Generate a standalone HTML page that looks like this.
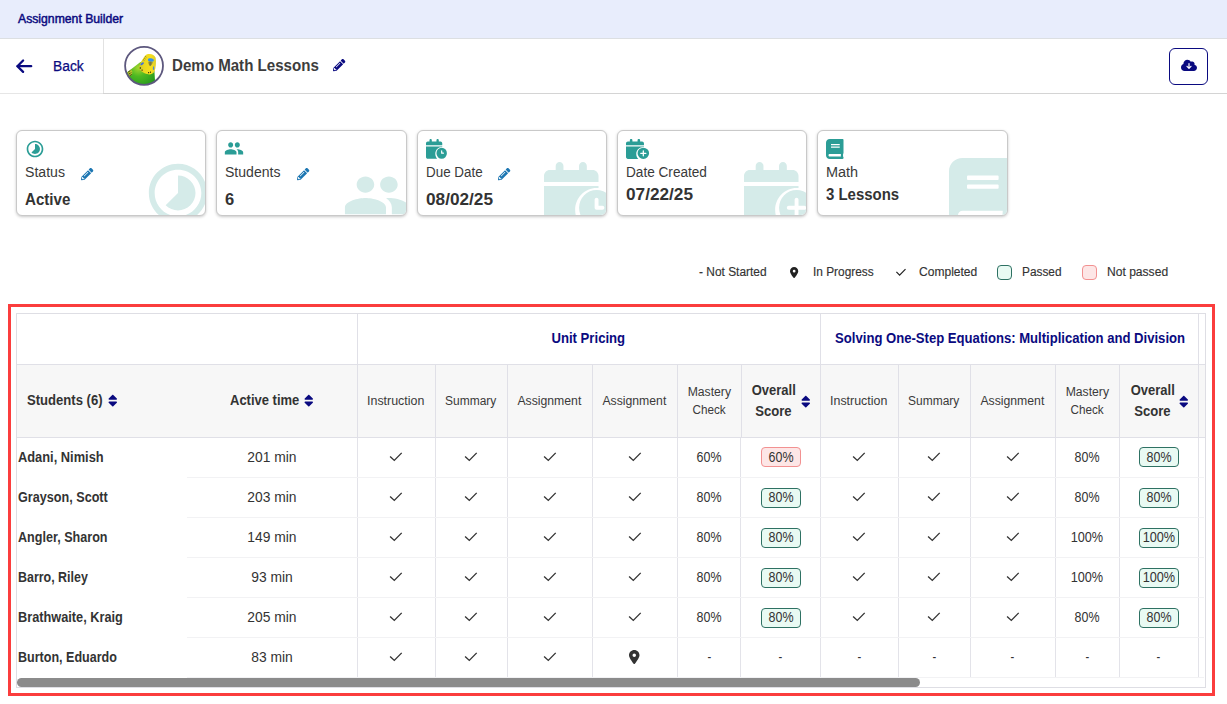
<!DOCTYPE html>
<html lang="en">
<head>
<meta charset="utf-8">
<title>Assignment Builder</title>
<style>
*{box-sizing:border-box;margin:0;padding:0}
html,body{width:1227px;height:704px;overflow:hidden;background:#fff}
body{font-family:"Liberation Sans",sans-serif;color:#333;position:relative}
.a{position:absolute}
.t{position:absolute;white-space:nowrap;line-height:1;display:block}
svg{position:absolute;overflow:visible}
#topbar{left:0;top:0;width:1227px;height:38px;background:#e8edfc}
#topline{left:0;top:38px;width:1227px;height:1px;background:#dcdfe2}
#hdrline{left:0;top:93px;width:1227px;height:1px;background:linear-gradient(90deg,#e6e6e6 103px,#d4d4d4 103px)}
#vdiv{left:103px;top:39px;width:1px;height:54px;background:#e2e2e2}
#avatar{left:124.6px;top:46.4px;width:38.8px;height:38.8px;border-radius:50%;background:#fff;overflow:hidden}
#ring{left:124px;top:46px}
#dl{left:1169px;top:48px;width:39px;height:37px;border:1px solid #0a0a80;border-radius:6px;background:#fff}
.card{position:absolute;top:130px;height:86px;background:#fff;border:1px solid #c9c9c9;border-radius:6px;box-shadow:0 1px 3px rgba(0,0,0,.22);overflow:hidden}
.lg{position:absolute;top:265px;width:15px;height:15px;border-radius:4px}
#redbox{left:8px;top:304px;width:1207px;height:392px;border:3px solid #fb3d3d}
#tbl{left:16px;top:313px;width:1190px;height:375px;border:1px solid #dedee4;background:#fff;overflow:hidden}
.h2bg{left:17px;top:365px;width:1188px;height:72px;background:#f7f7f7}
.vl{position:absolute;width:1px;background:#e0e0e7}
.vb{position:absolute;width:1px;background:#e3e3e9}
.hl{position:absolute;height:1px;background:#e0e0e7}
.rl{position:absolute;height:1px;left:187px;width:1017px;background:#f2f2f4}
.bd{position:absolute;width:40px;height:20px;border-radius:4px;border:1px solid}
.bp{border-color:#2e7163;background:#e9faf3}
.bf{border-color:#f29191;background:#fde6e6}
#thumb{left:17px;top:678px;width:903px;height:9px;border-radius:5px;background:#8b8b8b}
</style>
</head>
<body>
<div class="a" id="topbar"></div><div class="a" id="topline"></div>
<span class="t" style="left:18.30px;top:13px;font-size:12px;-webkit-text-stroke:0.45px #0a0a80;color:#0a0a80;transform:scaleX(1.0174);transform-origin:0 50%">Assignment Builder</span>
<div class="a" id="hdrline"></div><div class="a" id="vdiv"></div>
<svg style="left:14px;top:57px" width="20" height="18" viewBox="14 57 20 18"><g fill="none" stroke="#0a0a80" stroke-width="2.3" stroke-linecap="round" stroke-linejoin="round"><path d="M17.6 66.200H31.200"/><path d="M23.100 60.500L17.400 66.200L23.100 71.900"/></g></svg>
<span class="t" style="left:52.60px;top:59px;font-size:14px;-webkit-text-stroke:0.25px #0a0a80;color:#0a0a80;transform:scaleX(0.9885);transform-origin:0 50%">Back</span>
<div class="a" id="avatar"><svg style="left:-4.6px;top:-4.4px" width="48" height="48" viewBox="0 0 704 704"><defs><radialGradient id="gb" cx="270" cy="380" r="360" gradientUnits="userSpaceOnUse"><stop offset="0" stop-color="#a6d62e"/><stop offset=".35" stop-color="#4db822"/><stop offset=".75" stop-color="#2c9f1d"/><stop offset="1" stop-color="#1d8418"/></radialGradient><linearGradient id="gh" x1="280" y1="0" x2="530" y2="0" gradientUnits="userSpaceOnUse"><stop offset="0" stop-color="#c9c62c"/><stop offset=".3" stop-color="#ecd81f"/><stop offset=".7" stop-color="#f6de1c"/><stop offset="1" stop-color="#d9cc30"/></linearGradient></defs><path d="M95 452L200 372L300 292L505 425L513 560L498 670L170 670Z" fill="url(#gb)"/><path d="M108 442L160 404L182 432L176 480L138 506Z" fill="#b9c22a"/><path d="M120 440q22 -4 30 -22M128 468q24 -2 36 -22M140 494q22 -4 32 -22" fill="none" stroke="#2a2a10" stroke-width="11"/><path d="M281 378C280 346 300 300 330 255C352 222 372 192 398 181C442 164 506 180 523 232C535 300 523 380 509 425C493 470 440 483 398 471C350 457 288 428 281 378Z" fill="url(#gh)"/><path d="M352 232l22 18M338 256l20 16M366 208l20 16" stroke="#55551a" stroke-width="8" fill="none"/><ellipse cx="453" cy="264" rx="44" ry="25" fill="#3390ee" transform="rotate(12 453 264)"/><path d="M416 290C438 281 466 284 480 296C472 332 452 352 441 354C424 342 414 316 416 290Z" fill="#8e8a42"/><path d="M446 296L442 346" stroke="#5f5c2a" stroke-width="7"/><ellipse cx="325" cy="319" rx="30" ry="15" fill="#3d6fe0" transform="rotate(-40 325 319)"/><ellipse cx="492" cy="384" rx="9" ry="27" fill="#4a86dc"/><circle cx="298" cy="381" r="11" fill="#1e1e12"/><circle cx="324" cy="412" r="10" fill="#1e1e12"/><circle cx="419" cy="450" r="9" fill="#1e1e12"/><circle cx="447" cy="442" r="9" fill="#1e1e12"/></svg></div><svg id="ring" width="40" height="40" viewBox="0 0 40 40"><circle cx="20.050" cy="19.850" r="18.950" fill="none" stroke="#5d587e" stroke-width="1.8"/></svg>
<span class="t" style="left:172.20px;top:58px;font-size:16px;font-weight:700;color:#3d3d3d;transform:scaleX(0.9434);transform-origin:0 50%">Demo Math Lessons</span>
<svg style="left:333.00px;top:59.00px" width="12.30" height="12.30" viewBox="0 0 512 512"><path fill="#0a0a80" fill-rule="evenodd" d="M497.9 142.1l-46.1 46.1c-4.7 4.7-12.3 4.7-17 0l-111-111c-4.7-4.7-4.7-12.3 0-17l46.1-46.1c18.7-18.7 49.1-18.7 67.9 0l60.1 60.1c18.800 18.700 18.800 49.100 0 67.900zM284.200 99.800L21.600 362.400.400 483.900c-2.900 16.400 11.400 30.600 27.800 27.800l121.500-21.300 262.600-262.600c4.700-4.700 4.700-12.300 0-17l-111-111c-4.800-4.700-12.400-4.700-17.100 0zM124.100 339.900c-5.500-5.500-5.500-14.300 0-19.800l154-154c5.500-5.500 14.300-5.500 19.800 0s5.500 14.300 0 19.800l-154 154c-5.500 5.500-14.300 5.500-19.800 0zM88 424h48v36.300l-64.500 11.300-31.100-31.100L51.700 376H88v48z"/></svg>
<div class="a" id="dl"></div>
<svg style="left:1181.00px;top:58.80px" width="16.00" height="12.80" viewBox="0 0 640 512"><path fill="#0a0a80" fill-rule="evenodd" d="M144 480C64.500 480 0 415.500 0 336c0-62.800 40.200-116.200 96.200-135.900c-.1-2.700-.2-5.400-.2-8.100c0-88.400 71.600-160 160-160c59.300 0 111 32.200 138.700 80.200C409.900 102 428.300 96 448 96c53 0 96 43 96 96c0 12.200-2.300 23.800-6.400 34.600C596 238.400 640 290.100 640 352c0 70.700-57.300 128-128 128H144zm79-167l80 80c9.400 9.400 24.600 9.400 33.900 0l80-80c9.400-9.400 9.400-24.600 0-33.900s-24.600-9.400-33.900 0l-39 39V184c0-13.300-10.700-24-24-24s-24 10.700-24 24V318.100l-39-39c-9.400-9.400-24.600-9.400-33.900 0s-9.400 24.600 0 33.900z"/></svg>
<div class="card" style="left:16px;width:190px"><svg style="left:126.10px;top:27.10px" width="70.00" height="70.00" viewBox="0 0 24 24"><path fill="#d5ebe9" fill-rule="evenodd" d="M16.240 7.760C15.070 6.590 13.540 6 12 6v6l-4.240 4.240c2.340 2.340 6.140 2.340 8.490 0 2.340-2.340 2.340-6.140-.010-8.480zM12 2C6.480 2 2 6.480 2 12s4.480 10 10 10 10-4.480 10-10S17.520 2 12 2zm0 18c-4.420 0-8-3.580-8-8s3.580-8 8-8 8 3.580 8 8-3.580 8-8 8z"/></svg></div>
<svg style="left:24.90px;top:139.00px" width="20.00" height="20.00" viewBox="0 0 24 24"><path fill="#2b9d96" fill-rule="evenodd" d="M16.240 7.760C15.070 6.590 13.540 6 12 6v6l-4.240 4.240c2.340 2.340 6.140 2.340 8.490 0 2.340-2.340 2.340-6.140-.010-8.480zM12 2C6.480 2 2 6.480 2 12s4.480 10 10 10 10-4.480 10-10S17.520 2 12 2zm0 18c-4.420 0-8-3.580-8-8s3.580-8 8-8 8 3.580 8 8-3.580 8-8 8z"/></svg>
<span class="t" style="left:25.30px;top:165px;font-size:14px;color:#3a3a3a;transform:scaleX(1.0083);transform-origin:0 50%">Status</span>
<span class="t" style="left:25.30px;top:192px;font-size:16px;font-weight:700;transform:scaleX(0.9447);transform-origin:0 50%">Active</span>
<svg style="left:80.90px;top:167.80px" width="12.30" height="12.30" viewBox="0 0 512 512"><path fill="#1c76b2" fill-rule="evenodd" d="M497.9 142.1l-46.1 46.1c-4.7 4.7-12.3 4.7-17 0l-111-111c-4.7-4.7-4.7-12.3 0-17l46.1-46.1c18.7-18.7 49.1-18.7 67.9 0l60.1 60.1c18.800 18.700 18.800 49.100 0 67.900zM284.200 99.800L21.600 362.400.400 483.900c-2.900 16.400 11.400 30.600 27.800 27.800l121.500-21.300 262.600-262.600c4.700-4.700 4.700-12.300 0-17l-111-111c-4.800-4.700-12.400-4.700-17.100 0zM124.100 339.900c-5.500-5.500-5.500-14.300 0-19.800l154-154c5.500-5.500 14.300-5.500 19.800 0s5.500 14.300 0 19.800l-154 154c-5.500 5.500-14.300 5.500-19.800 0zM88 424h48v36.300l-64.500 11.300-31.100-31.100L51.700 376H88v48z"/></svg>
<div class="card" style="left:216px;width:191px"><svg style="left:125.00px;top:32.00px" width="70.39" height="64.80" viewBox="0 0 24 24" preserveAspectRatio="none"><path fill="#d5ebe9" fill-rule="evenodd" d="M16 11c1.660 0 2.990-1.340 2.990-3S17.660 5 16 5c-1.660 0-3 1.340-3 3s1.340 3 3 3zm-8 0c1.660 0 2.990-1.340 2.990-3S9.660 5 8 5C6.340 5 5 6.340 5 8s1.340 3 3 3zm0 2c-2.330 0-7 1.170-7 3.500V19h14v-2.500c0-2.330-4.670-3.500-7-3.500zm8 0c-.290 0-.620.020-.970.050 1.160.840 1.970 1.970 1.970 3.450V19h6v-2.500c0-2.330-4.670-3.500-7-3.500z"/></svg></div>
<svg style="left:224.10px;top:138.40px" width="20.00" height="20.88" viewBox="0 0 24 24" preserveAspectRatio="none"><path fill="#2b9d96" fill-rule="evenodd" d="M16 11c1.660 0 2.990-1.340 2.990-3S17.660 5 16 5c-1.660 0-3 1.340-3 3s1.340 3 3 3zm-8 0c1.660 0 2.990-1.340 2.990-3S9.660 5 8 5C6.340 5 5 6.340 5 8s1.340 3 3 3zm0 2c-2.330 0-7 1.170-7 3.500V19h14v-2.500c0-2.330-4.670-3.500-7-3.500zm8 0c-.290 0-.620.020-.970.050 1.160.840 1.970 1.970 1.970 3.450V19h6v-2.500c0-2.330-4.670-3.500-7-3.500z"/></svg>
<span class="t" style="left:225.30px;top:165px;font-size:14px;color:#3a3a3a;transform:scaleX(1.0037);transform-origin:0 50%">Students</span>
<span class="t" style="left:225.30px;top:192px;font-size:16px;font-weight:700;transform:scaleX(1.0316);transform-origin:0 50%">6</span>
<svg style="left:296.90px;top:167.80px" width="12.30" height="12.30" viewBox="0 0 512 512"><path fill="#1c76b2" fill-rule="evenodd" d="M497.9 142.1l-46.1 46.1c-4.7 4.7-12.3 4.7-17 0l-111-111c-4.7-4.7-4.7-12.3 0-17l46.1-46.1c18.7-18.7 49.1-18.7 67.9 0l60.1 60.1c18.800 18.700 18.800 49.100 0 67.900zM284.200 99.800L21.600 362.400.400 483.900c-2.900 16.400 11.400 30.600 27.800 27.800l121.500-21.300 262.600-262.600c4.700-4.700 4.700-12.300 0-17l-111-111c-4.800-4.700-12.400-4.700-17.100 0zM124.100 339.900c-5.500-5.500-5.500-14.300 0-19.800l154-154c5.500-5.500 14.300-5.500 19.800 0s5.500 14.300 0 19.800l-154 154c-5.500 5.500-14.300 5.500-19.800 0zM88 424h48v36.300l-64.500 11.300-31.100-31.100L51.700 376H88v48z"/></svg>
<div class="card" style="left:417px;width:190px"><svg style="left:126.00px;top:31.00px" width="70.10" height="63.74" viewBox="0 0 576 512" preserveAspectRatio="none"><path fill="#d5ebe9" fill-rule="evenodd" d="M96 32V64H48C21.500 64 0 85.500 0 112v48H448V112c0-26.500-21.500-48-48-48H352V32c0-17.700-14.300-32-32-32s-32 14.300-32 32V64H160V32c0-17.700-14.300-32-32-32S96 14.300 96 32zM448 192H0V464c0 26.500 21.500 48 48 48H308.200C276.100 479.800 256 434.300 256 384c0-97.200 78.800-176 176-176c5.400 0 10.700 .2 16 .7V192zM576 368a144 144 0 1 0 -288 0 144 144 0 1 0 288 0zM432 288c8.800 0 16 7.200 16 16v48h32c8.800 0 16 7.200 16 16s-7.200 16-16 16H432c-8.800 0-16-7.200-16-16V304c0-8.800 7.200-16 16-16z"/></svg></div>
<svg style="left:426.00px;top:139.10px" width="20.91" height="19.81" viewBox="0 0 576 512" preserveAspectRatio="none"><path fill="#2b9d96" fill-rule="evenodd" d="M96 32V64H48C21.500 64 0 85.500 0 112v48H448V112c0-26.500-21.500-48-48-48H352V32c0-17.700-14.300-32-32-32s-32 14.300-32 32V64H160V32c0-17.700-14.300-32-32-32S96 14.300 96 32zM448 192H0V464c0 26.500 21.500 48 48 48H308.200C276.100 479.800 256 434.300 256 384c0-97.200 78.800-176 176-176c5.400 0 10.700 .2 16 .7V192zM576 368a144 144 0 1 0 -288 0 144 144 0 1 0 288 0zM432 288c8.800 0 16 7.200 16 16v48h32c8.800 0 16 7.200 16 16s-7.200 16-16 16H432c-8.800 0-16-7.200-16-16V304c0-8.800 7.200-16 16-16z"/></svg>
<span class="t" style="left:426.30px;top:165px;font-size:14px;color:#3a3a3a;transform:scaleX(0.9569);transform-origin:0 50%">Due Date</span>
<span class="t" style="left:426.30px;top:192px;font-size:16px;font-weight:700;transform:scaleX(1.0750);transform-origin:0 50%">08/02/25</span>
<svg style="left:497.70px;top:167.80px" width="12.30" height="12.30" viewBox="0 0 512 512"><path fill="#1c76b2" fill-rule="evenodd" d="M497.9 142.1l-46.1 46.1c-4.7 4.7-12.3 4.7-17 0l-111-111c-4.7-4.7-4.7-12.3 0-17l46.1-46.1c18.7-18.7 49.1-18.7 67.9 0l60.1 60.1c18.800 18.700 18.800 49.100 0 67.900zM284.200 99.800L21.600 362.400.400 483.900c-2.900 16.400 11.400 30.600 27.800 27.800l121.500-21.300 262.600-262.600c4.700-4.700 4.700-12.300 0-17l-111-111c-4.800-4.700-12.400-4.700-17.100 0zM124.100 339.900c-5.500-5.500-5.500-14.300 0-19.800l154-154c5.500-5.500 14.300-5.500 19.800 0s5.500 14.300 0 19.800l-154 154c-5.500 5.500-14.300 5.500-19.800 0zM88 424h48v36.300l-64.500 11.300-31.100-31.100L51.700 376H88v48z"/></svg>
<div class="card" style="left:617px;width:190px"><svg style="left:126.20px;top:31.00px" width="70.10" height="63.74" viewBox="0 0 576 512" preserveAspectRatio="none"><path fill="#d5ebe9" fill-rule="evenodd" d="M96 32V64H48C21.500 64 0 85.500 0 112v48H448V112c0-26.500-21.500-48-48-48H352V32c0-17.700-14.300-32-32-32s-32 14.300-32 32V64H160V32c0-17.700-14.300-32-32-32S96 14.300 96 32zM448 192H0V464c0 26.500 21.500 48 48 48H308.200C276.100 479.800 256 434.300 256 384c0-97.200 78.800-176 176-176c5.400 0 10.700 .2 16 .7V192zM576 368a144 144 0 1 0 -288 0 144 144 0 1 0 288 0zM432 288c8.800 0 16 7.200 16 16v48h48c8.800 0 16 7.200 16 16s-7.200 16-16 16H448v48c0 8.800-7.200 16-16 16s-16-7.200-16-16V384H368c-8.800 0-16-7.200-16-16s7.200-16 16-16h48V304c0-8.800 7.200-16 16-16z"/></svg></div>
<svg style="left:626.00px;top:139.10px" width="23.10" height="19.92" viewBox="0 0 576 512" preserveAspectRatio="none"><path fill="#2b9d96" fill-rule="evenodd" d="M96 32V64H48C21.500 64 0 85.500 0 112v48H448V112c0-26.500-21.500-48-48-48H352V32c0-17.700-14.300-32-32-32s-32 14.300-32 32V64H160V32c0-17.700-14.300-32-32-32S96 14.300 96 32zM448 192H0V464c0 26.500 21.500 48 48 48H308.200C276.100 479.800 256 434.300 256 384c0-97.200 78.800-176 176-176c5.400 0 10.700 .2 16 .7V192zM576 368a144 144 0 1 0 -288 0 144 144 0 1 0 288 0zM432 288c8.800 0 16 7.200 16 16v48h48c8.800 0 16 7.200 16 16s-7.200 16-16 16H448v48c0 8.800-7.200 16-16 16s-16-7.200-16-16V384H368c-8.800 0-16-7.200-16-16s7.200-16 16-16h48V304c0-8.800 7.200-16 16-16z"/></svg>
<span class="t" style="left:625.60px;top:165px;font-size:14px;color:#3a3a3a;transform:scaleX(0.9720);transform-origin:0 50%">Date Created</span>
<span class="t" style="left:625.60px;top:187px;font-size:16px;font-weight:700;transform:scaleX(1.0750);transform-origin:0 50%">07/22/25</span>
<div class="card" style="left:817px;width:191px"><svg style="left:130.90px;top:26.75px" width="63.17" height="70.40" viewBox="0 0 448 512" preserveAspectRatio="none"><path fill="#d5ebe9" fill-rule="evenodd" d="M448 360V24c0-13.300-10.700-24-24-24H96C43 0 0 43 0 96v320c0 53 43 96 96 96h328c13.300 0 24-10.700 24-24v-16c0-7.500-3.500-14.300-8.900-18.700-4.200-15.400-4.200-59.300 0-74.700 5.400-4.300 8.900-11.100 8.900-18.600zM128 134c0-3.300 2.700-6 6-6h212c3.300 0 6 2.700 6 6v20c0 3.300-2.700 6-6 6H134c-3.300 0-6-2.700-6-6v-20zm0 64c0-3.300 2.700-6 6-6h212c3.300 0 6 2.700 6 6v20c0 3.300-2.700 6-6 6H134c-3.300 0-6-2.700-6-6v-20zm253.400 250H96c-17.700 0-32-14.300-32-32 0-17.600 14.400-32 32-32h285.400c-1.900 17.100-1.900 46.900 0 64z"/></svg></div>
<svg style="left:825.90px;top:139.00px" width="17.50" height="20.00" viewBox="0 0 448 512"><path fill="#2b9d96" fill-rule="evenodd" d="M448 360V24c0-13.300-10.700-24-24-24H96C43 0 0 43 0 96v320c0 53 43 96 96 96h328c13.300 0 24-10.700 24-24v-16c0-7.500-3.500-14.300-8.900-18.700-4.200-15.400-4.200-59.300 0-74.700 5.400-4.300 8.900-11.100 8.900-18.600zM128 134c0-3.300 2.700-6 6-6h212c3.300 0 6 2.700 6 6v20c0 3.300-2.700 6-6 6H134c-3.300 0-6-2.700-6-6v-20zm0 64c0-3.300 2.700-6 6-6h212c3.300 0 6 2.700 6 6v20c0 3.300-2.700 6-6 6H134c-3.300 0-6-2.700-6-6v-20zm253.400 250H96c-17.700 0-32-14.300-32-32 0-17.600 14.400-32 32-32h285.400c-1.900 17.100-1.900 46.900 0 64z"/></svg>
<span class="t" style="left:826.30px;top:165px;font-size:14px;color:#3a3a3a;transform:scaleX(1.0326);transform-origin:0 50%">Math</span>
<span class="t" style="left:826.30px;top:187px;font-size:16px;font-weight:700;transform:scaleX(0.9341);transform-origin:0 50%">3 Lessons</span>
<span class="t" style="left:698.60px;top:266px;font-size:12px;-webkit-text-stroke:0.15px #333;transform:scaleX(0.9936);transform-origin:0 50%">- Not Started</span>
<svg style="left:790.20px;top:266.80px" width="8.25" height="11.00" viewBox="0 0 384 512"><path fill="#222" fill-rule="evenodd" d="M215.700 499.200C267 435 384 279.400 384 192C384 86 298 0 192 0S0 86 0 192c0 87.400 117 243 168.300 307.200c12.300 15.300 35.100 15.300 47.400 0zM192 128a64 64 0 1 1 0 128 64 64 0 1 1 0-128z"/></svg>
<span class="t" style="left:812.60px;top:266px;font-size:12px;-webkit-text-stroke:0.15px #333;transform:scaleX(0.9891);transform-origin:0 50%">In Progress</span>
<svg style="left:894px;top:266px" width="14" height="12" viewBox="-7 -6 14 12"><path d="M-4.6 -0.100L-1.400 3.100L4.500 -2.900" fill="none" stroke="#222" stroke-width="1.2"/></svg>
<span class="t" style="left:918.80px;top:266px;font-size:12px;-webkit-text-stroke:0.15px #333;transform:scaleX(1.0040);transform-origin:0 50%">Completed</span>
<div class="lg" style="left:997px;border:1px solid #2e7163;background:#e9faf3"></div>
<span class="t" style="left:1022.20px;top:266px;font-size:12px;-webkit-text-stroke:0.15px #333;transform:scaleX(0.9883);transform-origin:0 50%">Passed</span>
<div class="lg" style="left:1082px;border:1px solid #f29191;background:#fde6e6"></div>
<span class="t" style="left:1107.00px;top:266px;font-size:12px;-webkit-text-stroke:0.15px #333;transform:scaleX(1.0064);transform-origin:0 50%">Not passed</span>
<div class="a" id="redbox"></div>
<div class="a" id="tbl"></div>
<div class="a h2bg"></div>
<div class="hl" style="left:17px;top:364px;width:1188px"></div>
<div class="hl" style="left:17px;top:437px;width:1188px"></div>
<div class="vl" style="left:357px;top:314px;height:50px"></div>
<div class="vl" style="left:820px;top:314px;height:50px"></div>
<div class="vl" style="left:1198px;top:314px;height:50px"></div>
<div class="vl" style="left:357px;top:365px;height:72px"></div>
<div class="vb" style="left:357px;top:438px;height:239px"></div>
<div class="vl" style="left:435px;top:365px;height:72px"></div>
<div class="vb" style="left:435px;top:438px;height:239px"></div>
<div class="vl" style="left:507px;top:365px;height:72px"></div>
<div class="vb" style="left:507px;top:438px;height:239px"></div>
<div class="vl" style="left:592px;top:365px;height:72px"></div>
<div class="vb" style="left:592px;top:438px;height:239px"></div>
<div class="vl" style="left:677px;top:365px;height:72px"></div>
<div class="vb" style="left:677px;top:438px;height:239px"></div>
<div class="vl" style="left:741px;top:365px;height:72px"></div>
<div class="vb" style="left:740px;top:438px;height:239px"></div>
<div class="vl" style="left:820px;top:365px;height:72px"></div>
<div class="vb" style="left:820px;top:438px;height:239px"></div>
<div class="vl" style="left:898px;top:365px;height:72px"></div>
<div class="vb" style="left:898px;top:438px;height:239px"></div>
<div class="vl" style="left:970px;top:365px;height:72px"></div>
<div class="vb" style="left:970px;top:438px;height:239px"></div>
<div class="vl" style="left:1055px;top:365px;height:72px"></div>
<div class="vb" style="left:1055px;top:438px;height:239px"></div>
<div class="vl" style="left:1119px;top:365px;height:72px"></div>
<div class="vb" style="left:1119px;top:438px;height:239px"></div>
<div class="vl" style="left:1198px;top:365px;height:72px"></div>
<div class="vb" style="left:1198px;top:438px;height:239px"></div>
<div class="rl" style="top:477px"></div>
<div class="rl" style="top:517px"></div>
<div class="rl" style="top:557px"></div>
<div class="rl" style="top:597px"></div>
<div class="rl" style="top:637px"></div>
<div class="rl" style="top:677px"></div>
<span class="t" style="left:549.32px;top:331px;font-size:14px;font-weight:700;color:#0a0a80;transform:scaleX(0.9381);transform-origin:50% 50%">Unit Pricing</span>
<span class="t" style="left:822.64px;top:331px;font-size:14px;font-weight:700;color:#0a0a80;transform:scaleX(0.9353);transform-origin:50% 50%">Solving One-Step Equations: Multiplication and Division</span>
<span class="t" style="left:27.00px;top:393px;font-size:14px;font-weight:700;transform:scaleX(0.9343);transform-origin:0 50%">Students (6)</span>
<svg style="left:107.70px;top:392.50px" width="9.54" height="15.26" viewBox="0 0 320 512"><path fill="#0a0a80" fill-rule="evenodd" d="M41 288h238c21.400 0 32.100 25.900 17 41L177 448c-9.400 9.400-24.600 9.400-33.900 0L24 329c-15.100-15.100-4.400-41 17-41zm255-105L177 64c-9.400-9.400-24.600-9.400-33.900 0L24 183c-15.100 15.100-4.400 41 17 41h238c21.400 0 32.100-25.900 17-41z"/></svg>
<span class="t" style="left:230.20px;top:393px;font-size:14px;font-weight:700;transform:scaleX(0.9279);transform-origin:0 50%">Active time</span>
<svg style="left:304.30px;top:392.50px" width="9.54" height="15.26" viewBox="0 0 320 512"><path fill="#0a0a80" fill-rule="evenodd" d="M41 288h238c21.400 0 32.100 25.900 17 41L177 448c-9.400 9.400-24.600 9.400-33.900 0L24 329c-15.100-15.100-4.400-41 17-41zm255-105L177 64c-9.400-9.400-24.600-9.400-33.900 0L24 183c-15.100 15.100-4.400 41 17 41h238c21.400 0 32.100-25.900 17-41z"/></svg>
<span class="t" style="left:368.47px;top:395px;font-size:12px;color:#3a3a3a;transform:scaleX(1.0350);transform-origin:50% 50%">Instruction</span>
<span class="t" style="left:445.48px;top:395px;font-size:12px;color:#3a3a3a;transform:scaleX(0.9967);transform-origin:50% 50%">Summary</span>
<span class="t" style="left:518.30px;top:395px;font-size:12px;color:#3a3a3a;transform:scaleX(1.0197);transform-origin:50% 50%">Assignment</span>
<span class="t" style="left:603.30px;top:395px;font-size:12px;color:#3a3a3a;transform:scaleX(1.0197);transform-origin:50% 50%">Assignment</span>
<span class="t" style="left:831.47px;top:395px;font-size:12px;color:#3a3a3a;transform:scaleX(1.0350);transform-origin:50% 50%">Instruction</span>
<span class="t" style="left:908.48px;top:395px;font-size:12px;color:#3a3a3a;transform:scaleX(0.9967);transform-origin:50% 50%">Summary</span>
<span class="t" style="left:981.30px;top:395px;font-size:12px;color:#3a3a3a;transform:scaleX(1.0197);transform-origin:50% 50%">Assignment</span>
<span class="t" style="left:687.81px;top:386px;font-size:12px;color:#3a3a3a;transform:scaleX(1.0154);transform-origin:50% 50%">Mastery</span>
<span class="t" style="left:692.14px;top:404px;font-size:12px;color:#3a3a3a;transform:scaleX(0.9747);transform-origin:50% 50%">Check</span>
<span class="t" style="left:1065.81px;top:386px;font-size:12px;color:#3a3a3a;transform:scaleX(1.0154);transform-origin:50% 50%">Mastery</span>
<span class="t" style="left:1070.14px;top:404px;font-size:12px;color:#3a3a3a;transform:scaleX(0.9747);transform-origin:50% 50%">Check</span>
<span class="t" style="left:750.16px;top:383px;font-size:14px;font-weight:700;transform:scaleX(0.9269);transform-origin:50% 50%">Overall</span>
<span class="t" style="left:754.44px;top:404px;font-size:14px;font-weight:700;transform:scaleX(0.9346);transform-origin:50% 50%">Score</span>
<svg style="left:800.50px;top:393.70px" width="9.54" height="15.26" viewBox="0 0 320 512"><path fill="#0a0a80" fill-rule="evenodd" d="M41 288h238c21.400 0 32.100 25.900 17 41L177 448c-9.400 9.400-24.600 9.400-33.900 0L24 329c-15.100-15.100-4.400-41 17-41zm255-105L177 64c-9.400-9.400-24.600-9.400-33.900 0L24 183c-15.100 15.100-4.400 41 17 41h238c21.400 0 32.100-25.900 17-41z"/></svg>
<span class="t" style="left:1128.76px;top:383px;font-size:14px;font-weight:700;transform:scaleX(0.9269);transform-origin:50% 50%">Overall</span>
<span class="t" style="left:1133.04px;top:404px;font-size:14px;font-weight:700;transform:scaleX(0.9346);transform-origin:50% 50%">Score</span>
<svg style="left:1178.50px;top:393.70px" width="9.54" height="15.26" viewBox="0 0 320 512"><path fill="#0a0a80" fill-rule="evenodd" d="M41 288h238c21.400 0 32.100 25.900 17 41L177 448c-9.400 9.400-24.600 9.400-33.900 0L24 329c-15.100-15.100-4.400-41 17-41zm255-105L177 64c-9.400-9.400-24.600-9.400-33.900 0L24 183c-15.100 15.100-4.400 41 17 41h238c21.400 0 32.100-25.900 17-41z"/></svg>
<span class="t" style="left:18.30px;top:450px;font-size:14px;font-weight:700;transform:scaleX(0.9174);transform-origin:0 50%">Adani, Nimish</span>
<span class="t" style="left:246.89px;top:450px;font-size:14px;transform:scaleX(0.9885);transform-origin:50% 50%">201 min</span>
<svg style="left:388.1px;top:450.0px" width="16" height="14" viewBox="-8 -7 16 14"><path d="M-5.900 -0.600L-1.700 3.400L5.700 -4.100" fill="none" stroke="#333" stroke-width="1.35"/></svg>
<svg style="left:463.1px;top:450.0px" width="16" height="14" viewBox="-8 -7 16 14"><path d="M-5.900 -0.600L-1.700 3.400L5.700 -4.100" fill="none" stroke="#333" stroke-width="1.35"/></svg>
<svg style="left:541.6px;top:450.0px" width="16" height="14" viewBox="-8 -7 16 14"><path d="M-5.900 -0.600L-1.700 3.400L5.700 -4.100" fill="none" stroke="#333" stroke-width="1.35"/></svg>
<svg style="left:626.6px;top:450.0px" width="16" height="14" viewBox="-8 -7 16 14"><path d="M-5.900 -0.600L-1.700 3.400L5.700 -4.100" fill="none" stroke="#333" stroke-width="1.35"/></svg>
<span class="t" style="left:695.13px;top:450px;font-size:14px;transform:scaleX(0.8904);transform-origin:50% 50%">60%</span>
<div class="bd bf" style="left:760.6px;top:447px"></div>
<span class="t" style="left:766.63px;top:450px;font-size:14px;transform:scaleX(0.8904);transform-origin:50% 50%">60%</span>
<svg style="left:851.1px;top:450.0px" width="16" height="14" viewBox="-8 -7 16 14"><path d="M-5.900 -0.600L-1.700 3.400L5.700 -4.100" fill="none" stroke="#333" stroke-width="1.35"/></svg>
<svg style="left:926.1px;top:450.0px" width="16" height="14" viewBox="-8 -7 16 14"><path d="M-5.900 -0.600L-1.700 3.400L5.700 -4.100" fill="none" stroke="#333" stroke-width="1.35"/></svg>
<svg style="left:1004.6px;top:450.0px" width="16" height="14" viewBox="-8 -7 16 14"><path d="M-5.900 -0.600L-1.700 3.400L5.700 -4.100" fill="none" stroke="#333" stroke-width="1.35"/></svg>
<span class="t" style="left:1073.13px;top:450px;font-size:14px;transform:scaleX(0.8904);transform-origin:50% 50%">80%</span>
<div class="bd bp" style="left:1138.7px;top:447px"></div>
<span class="t" style="left:1144.63px;top:450px;font-size:14px;transform:scaleX(0.8904);transform-origin:50% 50%">80%</span>
<span class="t" style="left:18.30px;top:490px;font-size:14px;font-weight:700;transform:scaleX(0.9016);transform-origin:0 50%">Grayson, Scott</span>
<span class="t" style="left:246.89px;top:490px;font-size:14px;transform:scaleX(0.9885);transform-origin:50% 50%">203 min</span>
<svg style="left:388.1px;top:490.0px" width="16" height="14" viewBox="-8 -7 16 14"><path d="M-5.900 -0.600L-1.700 3.400L5.700 -4.100" fill="none" stroke="#333" stroke-width="1.35"/></svg>
<svg style="left:463.1px;top:490.0px" width="16" height="14" viewBox="-8 -7 16 14"><path d="M-5.900 -0.600L-1.700 3.400L5.700 -4.100" fill="none" stroke="#333" stroke-width="1.35"/></svg>
<svg style="left:541.6px;top:490.0px" width="16" height="14" viewBox="-8 -7 16 14"><path d="M-5.900 -0.600L-1.700 3.400L5.700 -4.100" fill="none" stroke="#333" stroke-width="1.35"/></svg>
<svg style="left:626.6px;top:490.0px" width="16" height="14" viewBox="-8 -7 16 14"><path d="M-5.900 -0.600L-1.700 3.400L5.700 -4.100" fill="none" stroke="#333" stroke-width="1.35"/></svg>
<span class="t" style="left:695.13px;top:490px;font-size:14px;transform:scaleX(0.8904);transform-origin:50% 50%">80%</span>
<div class="bd bp" style="left:760.6px;top:488px"></div>
<span class="t" style="left:766.63px;top:490px;font-size:14px;transform:scaleX(0.8904);transform-origin:50% 50%">80%</span>
<svg style="left:851.1px;top:490.0px" width="16" height="14" viewBox="-8 -7 16 14"><path d="M-5.900 -0.600L-1.700 3.400L5.700 -4.100" fill="none" stroke="#333" stroke-width="1.35"/></svg>
<svg style="left:926.1px;top:490.0px" width="16" height="14" viewBox="-8 -7 16 14"><path d="M-5.900 -0.600L-1.700 3.400L5.700 -4.100" fill="none" stroke="#333" stroke-width="1.35"/></svg>
<svg style="left:1004.6px;top:490.0px" width="16" height="14" viewBox="-8 -7 16 14"><path d="M-5.900 -0.600L-1.700 3.400L5.700 -4.100" fill="none" stroke="#333" stroke-width="1.35"/></svg>
<span class="t" style="left:1073.13px;top:490px;font-size:14px;transform:scaleX(0.8904);transform-origin:50% 50%">80%</span>
<div class="bd bp" style="left:1138.7px;top:488px"></div>
<span class="t" style="left:1144.63px;top:490px;font-size:14px;transform:scaleX(0.8904);transform-origin:50% 50%">80%</span>
<span class="t" style="left:18.30px;top:530px;font-size:14px;font-weight:700;transform:scaleX(0.8989);transform-origin:0 50%">Angler, Sharon</span>
<span class="t" style="left:246.89px;top:530px;font-size:14px;transform:scaleX(0.9885);transform-origin:50% 50%">149 min</span>
<svg style="left:388.1px;top:530.0px" width="16" height="14" viewBox="-8 -7 16 14"><path d="M-5.900 -0.600L-1.700 3.400L5.700 -4.100" fill="none" stroke="#333" stroke-width="1.35"/></svg>
<svg style="left:463.1px;top:530.0px" width="16" height="14" viewBox="-8 -7 16 14"><path d="M-5.900 -0.600L-1.700 3.400L5.700 -4.100" fill="none" stroke="#333" stroke-width="1.35"/></svg>
<svg style="left:541.6px;top:530.0px" width="16" height="14" viewBox="-8 -7 16 14"><path d="M-5.900 -0.600L-1.700 3.400L5.700 -4.100" fill="none" stroke="#333" stroke-width="1.35"/></svg>
<svg style="left:626.6px;top:530.0px" width="16" height="14" viewBox="-8 -7 16 14"><path d="M-5.900 -0.600L-1.700 3.400L5.700 -4.100" fill="none" stroke="#333" stroke-width="1.35"/></svg>
<span class="t" style="left:695.13px;top:530px;font-size:14px;transform:scaleX(0.8904);transform-origin:50% 50%">80%</span>
<div class="bd bp" style="left:760.6px;top:528px"></div>
<span class="t" style="left:766.63px;top:530px;font-size:14px;transform:scaleX(0.8904);transform-origin:50% 50%">80%</span>
<svg style="left:851.1px;top:530.0px" width="16" height="14" viewBox="-8 -7 16 14"><path d="M-5.900 -0.600L-1.700 3.400L5.700 -4.100" fill="none" stroke="#333" stroke-width="1.35"/></svg>
<svg style="left:926.1px;top:530.0px" width="16" height="14" viewBox="-8 -7 16 14"><path d="M-5.900 -0.600L-1.700 3.400L5.700 -4.100" fill="none" stroke="#333" stroke-width="1.35"/></svg>
<svg style="left:1004.6px;top:530.0px" width="16" height="14" viewBox="-8 -7 16 14"><path d="M-5.900 -0.600L-1.700 3.400L5.700 -4.100" fill="none" stroke="#333" stroke-width="1.35"/></svg>
<span class="t" style="left:1069.24px;top:530px;font-size:14px;transform:scaleX(0.9076);transform-origin:50% 50%">100%</span>
<div class="bd bp" style="left:1138.7px;top:528px"></div>
<span class="t" style="left:1140.74px;top:530px;font-size:14px;transform:scaleX(0.9076);transform-origin:50% 50%">100%</span>
<span class="t" style="left:18.30px;top:570px;font-size:14px;font-weight:700;transform:scaleX(0.8885);transform-origin:0 50%">Barro, Riley</span>
<span class="t" style="left:250.78px;top:570px;font-size:14px;transform:scaleX(0.9888);transform-origin:50% 50%">93 min</span>
<svg style="left:388.1px;top:570.0px" width="16" height="14" viewBox="-8 -7 16 14"><path d="M-5.900 -0.600L-1.700 3.400L5.700 -4.100" fill="none" stroke="#333" stroke-width="1.35"/></svg>
<svg style="left:463.1px;top:570.0px" width="16" height="14" viewBox="-8 -7 16 14"><path d="M-5.900 -0.600L-1.700 3.400L5.700 -4.100" fill="none" stroke="#333" stroke-width="1.35"/></svg>
<svg style="left:541.6px;top:570.0px" width="16" height="14" viewBox="-8 -7 16 14"><path d="M-5.900 -0.600L-1.700 3.400L5.700 -4.100" fill="none" stroke="#333" stroke-width="1.35"/></svg>
<svg style="left:626.6px;top:570.0px" width="16" height="14" viewBox="-8 -7 16 14"><path d="M-5.900 -0.600L-1.700 3.400L5.700 -4.100" fill="none" stroke="#333" stroke-width="1.35"/></svg>
<span class="t" style="left:695.13px;top:570px;font-size:14px;transform:scaleX(0.8904);transform-origin:50% 50%">80%</span>
<div class="bd bp" style="left:760.6px;top:568px"></div>
<span class="t" style="left:766.63px;top:570px;font-size:14px;transform:scaleX(0.8904);transform-origin:50% 50%">80%</span>
<svg style="left:851.1px;top:570.0px" width="16" height="14" viewBox="-8 -7 16 14"><path d="M-5.900 -0.600L-1.700 3.400L5.700 -4.100" fill="none" stroke="#333" stroke-width="1.35"/></svg>
<svg style="left:926.1px;top:570.0px" width="16" height="14" viewBox="-8 -7 16 14"><path d="M-5.900 -0.600L-1.700 3.400L5.700 -4.100" fill="none" stroke="#333" stroke-width="1.35"/></svg>
<svg style="left:1004.6px;top:570.0px" width="16" height="14" viewBox="-8 -7 16 14"><path d="M-5.900 -0.600L-1.700 3.400L5.700 -4.100" fill="none" stroke="#333" stroke-width="1.35"/></svg>
<span class="t" style="left:1069.24px;top:570px;font-size:14px;transform:scaleX(0.9076);transform-origin:50% 50%">100%</span>
<div class="bd bp" style="left:1138.7px;top:568px"></div>
<span class="t" style="left:1140.74px;top:570px;font-size:14px;transform:scaleX(0.9076);transform-origin:50% 50%">100%</span>
<span class="t" style="left:18.30px;top:610px;font-size:14px;font-weight:700;transform:scaleX(0.9103);transform-origin:0 50%">Brathwaite, Kraig</span>
<span class="t" style="left:246.89px;top:610px;font-size:14px;transform:scaleX(0.9885);transform-origin:50% 50%">205 min</span>
<svg style="left:388.1px;top:610.0px" width="16" height="14" viewBox="-8 -7 16 14"><path d="M-5.900 -0.600L-1.700 3.400L5.700 -4.100" fill="none" stroke="#333" stroke-width="1.35"/></svg>
<svg style="left:463.1px;top:610.0px" width="16" height="14" viewBox="-8 -7 16 14"><path d="M-5.900 -0.600L-1.700 3.400L5.700 -4.100" fill="none" stroke="#333" stroke-width="1.35"/></svg>
<svg style="left:541.6px;top:610.0px" width="16" height="14" viewBox="-8 -7 16 14"><path d="M-5.900 -0.600L-1.700 3.400L5.700 -4.100" fill="none" stroke="#333" stroke-width="1.35"/></svg>
<svg style="left:626.6px;top:610.0px" width="16" height="14" viewBox="-8 -7 16 14"><path d="M-5.900 -0.600L-1.700 3.400L5.700 -4.100" fill="none" stroke="#333" stroke-width="1.35"/></svg>
<span class="t" style="left:695.13px;top:610px;font-size:14px;transform:scaleX(0.8904);transform-origin:50% 50%">80%</span>
<div class="bd bp" style="left:760.6px;top:608px"></div>
<span class="t" style="left:766.63px;top:610px;font-size:14px;transform:scaleX(0.8904);transform-origin:50% 50%">80%</span>
<svg style="left:851.1px;top:610.0px" width="16" height="14" viewBox="-8 -7 16 14"><path d="M-5.900 -0.600L-1.700 3.400L5.700 -4.100" fill="none" stroke="#333" stroke-width="1.35"/></svg>
<svg style="left:926.1px;top:610.0px" width="16" height="14" viewBox="-8 -7 16 14"><path d="M-5.900 -0.600L-1.700 3.400L5.700 -4.100" fill="none" stroke="#333" stroke-width="1.35"/></svg>
<svg style="left:1004.6px;top:610.0px" width="16" height="14" viewBox="-8 -7 16 14"><path d="M-5.900 -0.600L-1.700 3.400L5.700 -4.100" fill="none" stroke="#333" stroke-width="1.35"/></svg>
<span class="t" style="left:1073.13px;top:610px;font-size:14px;transform:scaleX(0.8904);transform-origin:50% 50%">80%</span>
<div class="bd bp" style="left:1138.7px;top:608px"></div>
<span class="t" style="left:1144.63px;top:610px;font-size:14px;transform:scaleX(0.8904);transform-origin:50% 50%">80%</span>
<span class="t" style="left:18.30px;top:650px;font-size:14px;font-weight:700;transform:scaleX(0.8957);transform-origin:0 50%">Burton, Eduardo</span>
<span class="t" style="left:250.78px;top:650px;font-size:14px;transform:scaleX(0.9888);transform-origin:50% 50%">83 min</span>
<svg style="left:388.1px;top:650.0px" width="16" height="14" viewBox="-8 -7 16 14"><path d="M-5.900 -0.600L-1.700 3.400L5.700 -4.100" fill="none" stroke="#333" stroke-width="1.35"/></svg>
<svg style="left:463.1px;top:650.0px" width="16" height="14" viewBox="-8 -7 16 14"><path d="M-5.900 -0.600L-1.700 3.400L5.700 -4.100" fill="none" stroke="#333" stroke-width="1.35"/></svg>
<svg style="left:541.6px;top:650.0px" width="16" height="14" viewBox="-8 -7 16 14"><path d="M-5.900 -0.600L-1.700 3.400L5.700 -4.100" fill="none" stroke="#333" stroke-width="1.35"/></svg>
<svg style="left:629.40px;top:650.10px" width="10.50" height="14.00" viewBox="0 0 384 512"><path fill="#333" fill-rule="evenodd" d="M215.700 499.200C267 435 384 279.400 384 192C384 86 298 0 192 0S0 86 0 192c0 87.400 117 243 168.300 307.200c12.300 15.300 35.100 15.300 47.400 0zM192 128a64 64 0 1 1 0 128 64 64 0 1 1 0-128z"/></svg>
<span class="t" style="left:706.81px;top:650px;font-size:14px;transform:scaleX(0.7963);transform-origin:50% 50%">-</span>
<span class="t" style="left:778.31px;top:650px;font-size:14px;transform:scaleX(0.7963);transform-origin:50% 50%">-</span>
<span class="t" style="left:856.81px;top:650px;font-size:14px;transform:scaleX(0.7963);transform-origin:50% 50%">-</span>
<span class="t" style="left:931.81px;top:650px;font-size:14px;transform:scaleX(0.7963);transform-origin:50% 50%">-</span>
<span class="t" style="left:1010.31px;top:650px;font-size:14px;transform:scaleX(0.7963);transform-origin:50% 50%">-</span>
<span class="t" style="left:1084.81px;top:650px;font-size:14px;transform:scaleX(0.7963);transform-origin:50% 50%">-</span>
<span class="t" style="left:1156.31px;top:650px;font-size:14px;transform:scaleX(0.7963);transform-origin:50% 50%">-</span>
<div class="a" id="thumb"></div>
</body>
</html>
